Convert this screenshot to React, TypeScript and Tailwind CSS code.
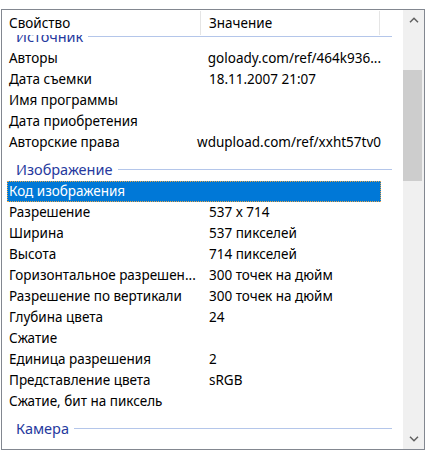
import React from "react";

type Item =
  | { kind: "group"; label: string }
  | { kind: "row"; name: string; value?: string; selected?: boolean };

const items: Item[] = [
  { kind: "group", label: "Источник" },
  { kind: "row", name: "Авторы", value: "goloady.com/ref/464k936..." },
  { kind: "row", name: "Дата съемки", value: "18.11.2007 21:07" },
  { kind: "row", name: "Имя программы" },
  { kind: "row", name: "Дата приобретения" },
  { kind: "row", name: "Авторские права", value: "wdupload.com/ref/xxht57tv0" },
  { kind: "group", label: "Изображение" },
  { kind: "row", name: "Код изображения", selected: true },
  { kind: "row", name: "Разрешение", value: "537 x 714" },
  { kind: "row", name: "Ширина", value: "537 пикселей" },
  { kind: "row", name: "Высота", value: "714 пикселей" },
  { kind: "row", name: "Горизонтальное разрешен...", value: "300 точек на дюйм" },
  { kind: "row", name: "Разрешение по вертикали", value: "300 точек на дюйм" },
  { kind: "row", name: "Глубина цвета", value: "24" },
  { kind: "row", name: "Сжатие" },
  { kind: "row", name: "Единица разрешения", value: "2" },
  { kind: "row", name: "Представление цвета", value: "sRGB" },
  { kind: "row", name: "Сжатие, бит на пиксель" },
  { kind: "group", label: "Камера" },
];

function GroupHeader({ label }: { label: string }) {
  return (
    <div className="h-[28px] flex items-start">
      <div className="flex items-center h-[32px] w-[390px] pl-[14px]">
        <span className="text-[14.5px] leading-none text-[#26399e] whitespace-nowrap">{label}</span>
        <div className="flex-1 h-px bg-[#b4c6ea] ml-[5px]" />
      </div>
    </div>
  );
}

function Row({ name, value, selected }: { name: string; value?: string; selected?: boolean }) {
  return (
    <div
      className={
        "h-[21px] ml-[5px] w-[374px] flex items-center text-[13.5px] whitespace-nowrap " +
        (selected
          ? "bg-[#0078d7] text-white outline outline-1 outline-dotted outline-[#e8a64a] -outline-offset-1"
          : "text-black")
      }
    >
      <div className="w-[200px] pl-[2px] overflow-hidden">{name}</div>
      <div className="pl-[2px]">{value}</div>
    </div>
  );
}

function Chevron({ up }: { up?: boolean }) {
  return (
    <svg width="10" height="6" viewBox="0 0 10 6" className="block">
      <path
        d={up ? "M1 5.2 L5 1.2 L9 5.2" : "M1 0.8 L5 4.8 L9 0.8"}
        fill="none"
        stroke="#606060"
        strokeWidth="1.5"
      />
    </svg>
  );
}

export default function App() {
  return (
    <div
      className="w-[426px] h-[459px] bg-white pt-[9px] pl-[1px]"
      style={{ fontFamily: '"Noto Sans", "Open Sans", sans-serif' }}
    >
      <div className="w-[424px] h-[441px] border border-[#828790] flex">
        <div className="w-[401px] flex flex-col">
          <div className="h-[25px] flex items-stretch text-[13.5px] text-black">
            <div className="w-[199px] pl-[7px] flex items-center border-r border-[#e5e5e5] mt-[1px]">Свойство</div>
            <div className="w-[179px] pl-[8px] flex items-center border-r border-[#e5e5e5] mt-[1px]">Значение</div>
          </div>
          <div className="flex-1 overflow-hidden">
            <div className="-mt-[15px]">
              {items.map((it, i) =>
                it.kind === "group" ? (
                  <GroupHeader key={i} label={it.label} />
                ) : (
                  <Row key={i} name={it.name} value={it.value} selected={it.selected} />
                )
              )}
            </div>
          </div>
        </div>
        <div className="w-[21px] bg-[#f0f0f0] flex flex-col">
          <div className="h-[20px] flex items-center justify-center pl-[1px]">
            <Chevron up />
          </div>
          <div className="flex-1 pt-[40px]">
            <div className="h-[111px] w-[19px] bg-[#cdcdcd]" />
          </div>
          <div className="h-[20px] flex items-center justify-center pl-[1px]">
            <Chevron />
          </div>
        </div>
      </div>
    </div>
  );
}
